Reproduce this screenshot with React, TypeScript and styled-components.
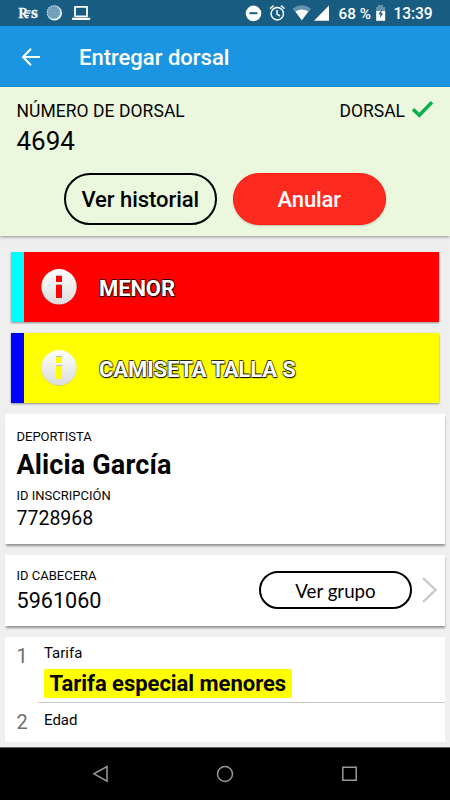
import React from "react";
import styled, { createGlobalStyle } from "styled-components";

const GlobalStyle = createGlobalStyle`
  * { box-sizing: border-box; }
  body { margin: 0; background: #efefef; font-family: Roboto, sans-serif; color: #050505; }
  button { font-family: inherit; padding: 0; cursor: pointer; }
  svg { display: block; flex: none; }
`;

const Screen = styled.div`
  width: 450px;
  height: 800px;
  display: flex;
  flex-direction: column;
  overflow: hidden;
  background: #efefef;
`;

const StatusBar = styled.header`
  height: 26px;
  flex: none;
  display: flex;
  justify-content: space-between;
  background: #185c82;
  color: #fff;
`;

const AppBar = styled.div`
  height: 61px;
  flex: none;
  display: flex;
  align-items: center;
  padding: 1px 0 0 21px;
  gap: 38px;
  background: #1b95e2;
  color: #fff;
`;

const Text = styled.div<{
  $size: number;
  $line: number;
  $weight?: number;
  $spacing?: number;
  $top?: number;
}>`
  margin: ${(p) => p.$top ?? 0}px 0 0;
  font-size: ${(p) => p.$size}px;
  line-height: ${(p) => p.$line}px;
  font-weight: ${(p) => p.$weight ?? 400};
  letter-spacing: ${(p) => p.$spacing ?? 0}px;
  white-space: nowrap;
`;

const BibPanel = styled.section`
  height: 149px;
  flex: none;
  padding: 14px 17px 0 16.5px;
  background: #ebf8de;
  box-shadow: 0 1px 3px rgba(0, 0, 0, 0.4);
`;

const SpreadRow = styled.div`
  display: flex;
  justify-content: space-between;
`;

const BibState = styled.div`
  display: flex;
  gap: 7px;
`;

const Actions = styled.div`
  display: flex;
  justify-content: center;
  gap: 16px;
  margin-top: 17px;
`;

const PillButton = styled.button<{ $filled?: boolean }>`
  width: 153px;
  height: 52px;
  border-radius: 26px;
  border: ${(p) => (p.$filled ? "1px solid #ff1a12" : "2px solid #000")};
  background: ${(p) => (p.$filled ? "#fd2a20" : "transparent")};
  color: ${(p) => (p.$filled ? "#fff" : "#000")};
  box-shadow: ${(p) => (p.$filled ? "0 1px 2px rgba(0,0,0,.2)" : "none")};
  padding-top: 2px;
`;

const GroupButton = styled.button`
  width: 153px;
  height: 38px;
  border-radius: 19px;
  border: 2px solid #000;
  background: #fff;
  color: #000;
  font: 400 18.7px/34px Lato, sans-serif;
  padding-top: 1px;
`;

const Banners = styled.div`
  display: flex;
  flex-direction: column;
  gap: 11px;
  padding: 16px 11px 11px;
`;

const Banner = styled.div<{ $fill: string; $stripe: string }>`
  height: 70px;
  display: flex;
  align-items: center;
  padding-left: 17px;
  gap: 22px;
  border-left: 13px solid ${(p) => p.$stripe};
  background: ${(p) => p.$fill};
  box-shadow: 0 1px 2px rgba(0, 0, 0, 0.4);
`;

const BannerLabel = styled.span`
  font-size: 22px;
  line-height: 28px;
  font-weight: 700;
  letter-spacing: -0.1px;
  color: #fff;
  margin-top: 3px;
  text-shadow:
    -0.7px -0.7px 0.6px rgba(0, 0, 0, 0.75),
    0.7px -0.7px 0.6px rgba(0, 0, 0, 0.4),
    0.8px 0.8px 1px rgba(0, 0, 0, 0.9),
    -0.5px 1px 1px rgba(0, 0, 0, 0.6);
`;

const Card = styled.section<{ $height: number }>`
  height: ${(p) => p.$height}px;
  flex: none;
  margin: 0 5px 11px;
  padding: 15px 0 0 11.5px;
  background: #fff;
  box-shadow: 0 2px 2px -0.5px rgba(0, 0, 0, 0.38);
`;

const GroupCard = styled(Card)`
  display: flex;
  justify-content: space-between;
  padding: 0 8px 0 11.5px;
`;

const GroupInfo = styled.div`
  padding-top: 13px;
`;

const GroupActions = styled.div`
  display: flex;
  align-items: center;
  gap: 10px;
  padding-bottom: 1px;
`;

const List = styled.ol`
  margin: 0 5px;
  padding: 0;
  height: 105px;
  flex: none;
  background: #fff;
  list-style: none;
`;

const ListItem = styled.li`
  display: flex;
  padding-left: 11.5px;
`;

const ItemIndex = styled.span`
  width: 21.5px;
  flex: none;
  font-size: 20px;
  line-height: 26px;
  color: #707070;
  padding-top: 6px;
`;

const ItemBody = styled.div<{ $divided?: boolean; $height: number }>`
  flex: 1;
  height: ${(p) => p.$height}px;
  padding-left: 6px;
  padding-top: 6px;
  border-bottom: ${(p) => (p.$divided ? "1px solid #c8c8c8" : "none")};
`;

const Highlight = styled.div`
  width: 248px;
  height: 28.5px;
  margin-top: 6px;
  padding-left: 5.5px;
  background: #ff0;
`;

const NavBar = styled.nav`
  height: 53px;
  flex: none;
  margin-top: auto;
  display: flex;
  background: #000;
  border-top: 1px solid #59605d;
`;

const LeftStatus = () => (
  <svg width="110" height="26" viewBox="0 0 110 26">
    <text x="18.5" y="18" fill="#fff" stroke="#fff" strokeWidth=".3" fontFamily="Liberation Serif" fontWeight="700" fontSize="15.5" textLength="9.5" lengthAdjust="spacingAndGlyphs">R</text>
    <path d="M26.5 10.8h4.3M26.3 13.2h4M26 15.6h3" stroke="#fff" strokeWidth="1.2" />
    <text x="31" y="18" fill="#fff" stroke="#fff" strokeWidth=".3" fontFamily="Liberation Serif" fontWeight="700" fontSize="16.5" textLength="6.8" lengthAdjust="spacingAndGlyphs">s</text>
    <circle cx="54.5" cy="13" r="7.5" fill="#fff" />
    <circle cx="53.7" cy="12.3" r="6.8" fill="#6d9cb6" />
    <circle cx="53.7" cy="12.3" r="6.4" fill="none" stroke="#b4cfdd" strokeWidth="1.4" strokeDasharray="1.2 1.2" />
    <path d="M49.5 10h8.5M49 12.5h9.5M49.5 15h8.5" stroke="#8db3c7" strokeWidth="1" strokeDasharray="1 1" />
    <path d="M75 6.8h12v9.5H75z" fill="none" stroke="#fff" strokeWidth="1.8" strokeLinejoin="round" />
    <path d="M72 17.8h18.2v1.2q0 1-1 1H73q-1 0-1-1z" fill="#fff" />
  </svg>
);

const RightStatus = () => (
  <svg width="210" height="26" viewBox="240 0 210 26">
    <circle cx="253.5" cy="13.4" r="7.8" fill="#fff" />
    <path d="M249.5 13.2h8" stroke="#185c82" strokeWidth="2" />
    <g fill="none" stroke="#fff" strokeWidth="1.5">
      <circle cx="277.3" cy="13.7" r="6.2" />
      <path d="M277 10v4.2l3 1.8M270 8.6l3.6-3M281 5.6l3.6 3" />
    </g>
    <path d="M292.5 8.7Q302 1.9 311 8.7L301.8 20.3z" fill="#6394ae" />
    <path d="M295.5 11.5q6.3-4.2 12.8 0L301.8 20.3z" fill="#fff" />
    <path d="M329 5.5V20.8H314z" fill="#fff" />
    <text x="338.5" y="19" fill="#fff" fontFamily="Roboto" fontWeight="500" fontSize="15.3" textLength="32.5">68 %</text>
    <path d="M378 5h5v2h2.2v4h-9V7h1.8z" fill="#6394ae" />
    <path d="M376.2 11h9v9.8h-9z" fill="#fff" />
    <path d="M382 9.8l-3.8 4.5h2.2l-.8 4 3.5-5h-2z" fill="#185c82" />
    <text x="393.5" y="19" fill="#fff" fontFamily="Roboto" fontWeight="500" fontSize="15.6" textLength="39">13:39</text>
  </svg>
);

const InfoIcon = ({ hole, id }: { hole: string; id: string }) => (
  <svg width="36" height="38" viewBox="0 0 36 38">
    <defs>
      <linearGradient id={id} x2="0" y2="1">
        <stop stopColor="#fff" />
        <stop offset="1" stopColor="#dcdcdc" />
      </linearGradient>
    </defs>
    <circle cx="18" cy="19.2" r="17.5" fill="#000" opacity=".3" />
    <circle cx="18" cy="18.8" r="17.7" fill={`url(#${id})`} />
    <path d="M15 8h6v6h-6zM15 17h6v13h-6z" fill={hole} />
    <path d="M15 8.2q0-.8.8-.8h4.5q.8 0 .8.8M15 17.3q0-.8.8-.8h4.5q.8 0 .8.8" fill="none" stroke="#aaa" strokeWidth=".8" />
  </svg>
);

export default function App() {
  return (
    <Screen>
      <GlobalStyle />
      <StatusBar>
        <LeftStatus />
        <RightStatus />
      </StatusBar>
      <AppBar>
        <svg width="20" height="20" viewBox="0 0 20 20" fill="none" stroke="#fff" strokeWidth="2">
          <path d="M10 1.8L2 10l8 8.2M2 10h17" />
        </svg>
        <Text as="h1" $size={22} $line={30} $weight={500} $top={1}>Entregar dorsal</Text>
      </AppBar>
      <BibPanel>
        <SpreadRow>
          <Text $size={17.5} $line={20} $spacing={0.05}>NÚMERO DE DORSAL</Text>
          <BibState>
            <Text $size={17.5} $line={20}>DORSAL</Text>
            <svg width="21" height="18" viewBox="0 0 21 18" fill="none" stroke="#0bb04b" strokeWidth="3.6">
              <path d="M1 8.3l6.3 6L20 1.3" />
            </svg>
          </BibState>
        </SpreadRow>
        <Text $size={26} $line={30} $top={5}>4694</Text>
        <Actions>
          <PillButton>
            <Text $size={22} $line={28} $weight={500} $spacing={-0.05}>Ver historial</Text>
          </PillButton>
          <PillButton $filled>
            <Text $size={22} $line={28} $weight={500} $spacing={-0.1}>Anular</Text>
          </PillButton>
        </Actions>
      </BibPanel>
      <Banners>
        <Banner $fill="#f00" $stripe="#0ff">
          <InfoIcon hole="#f00" id="shineTop" />
          <BannerLabel>MENOR</BannerLabel>
        </Banner>
        <Banner $fill="#ff0" $stripe="#00f">
          <InfoIcon hole="#ff0" id="shineBottom" />
          <BannerLabel>CAMISETA TALLA S</BannerLabel>
        </Banner>
      </Banners>
      <Card $height={130}>
        <Text $size={13} $line={16}>DEPORTISTA</Text>
        <Text as="h2" $size={27} $line={32} $weight={700} $spacing={0.14} $top={4}>Alicia García</Text>
        <Text $size={13} $line={16} $top={7}>ID INSCRIPCIÓN</Text>
        <Text $size={19.5} $line={24} $top={3}>7728968</Text>
      </Card>
      <GroupCard $height={71}>
        <GroupInfo>
          <Text $size={13} $line={16}>ID CABECERA</Text>
          <Text $size={21.6} $line={26} $top={4}>5961060</Text>
        </GroupInfo>
        <GroupActions>
          <GroupButton>Ver grupo</GroupButton>
          <svg width="15" height="26" viewBox="0 0 15 26" fill="none" stroke="#c9c9c9" strokeWidth="2.4">
            <path d="M1 1l12.5 12L1 25" />
          </svg>
        </GroupActions>
      </GroupCard>
      <List>
        <ListItem>
          <ItemIndex>1</ItemIndex>
          <ItemBody $divided $height={66}>
            <Text $size={15} $line={20}>Tarifa</Text>
            <Highlight>
              <Text $size={22} $line={30} $weight={700} $spacing={-0.03}>Tarifa especial menores</Text>
            </Highlight>
          </ItemBody>
        </ListItem>
        <ListItem>
          <ItemIndex>2</ItemIndex>
          <ItemBody $height={39}>
            <Text $size={15} $line={20} $top={1}>Edad</Text>
          </ItemBody>
        </ListItem>
      </List>
      <NavBar>
        <svg width="450" height="52" viewBox="0 748 450 52" fill="none" stroke="#999" strokeWidth="1.5">
          <path d="M107 766.5v14.6l-13-7.3z" />
          <circle cx="225" cy="774" r="7.5" />
          <path d="M342.8 767.3h13.4v13H342.8z" />
        </svg>
      </NavBar>
    </Screen>
  );
}
